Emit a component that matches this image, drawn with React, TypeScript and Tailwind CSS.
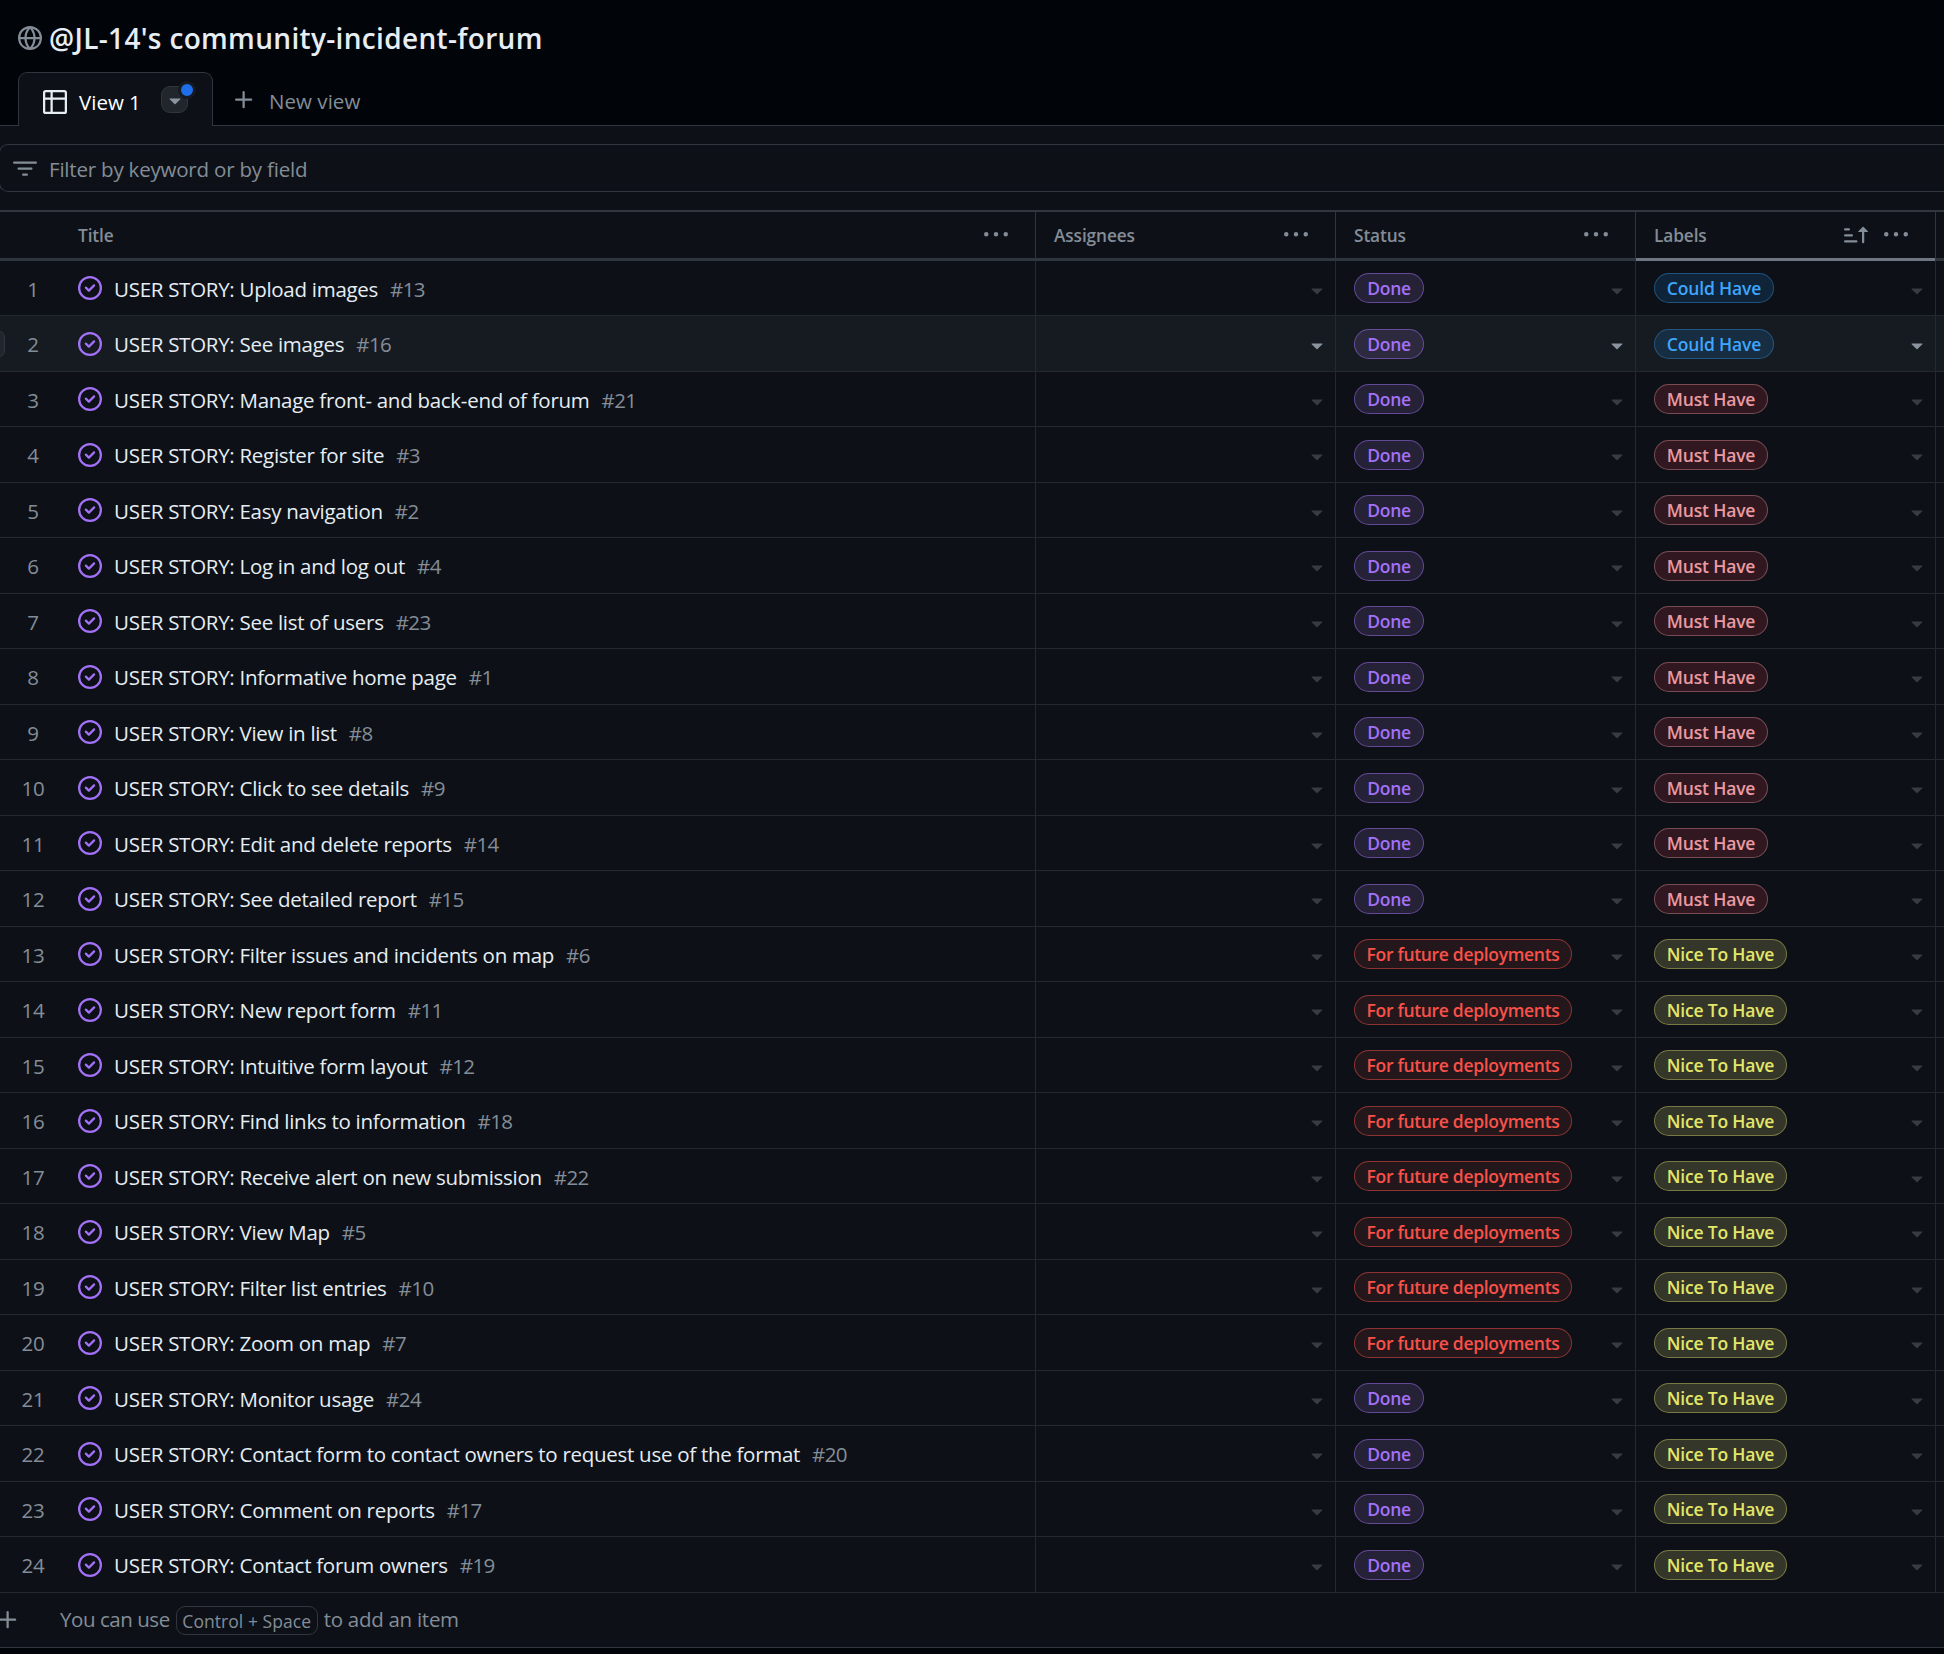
import React from "react";

const PATHS = {
  globe:
    "M8 0a8 8 0 1 1 0 16A8 8 0 0 1 8 0ZM5.78 8.75a9.64 9.64 0 0 0 1.363 4.177c.255.426.542.832.857 1.215.245-.296.551-.705.857-1.215A9.64 9.64 0 0 0 10.22 8.75Zm4.44-1.5a9.64 9.64 0 0 0-1.363-4.177c-.307-.51-.612-.919-.857-1.215a9.927 9.927 0 0 0-.857 1.215A9.64 9.64 0 0 0 5.78 7.25Zm-5.944 1.5H1.543a6.507 6.507 0 0 0 4.666 5.5c-.123-.181-.24-.365-.352-.552-.715-1.192-1.437-2.874-1.581-4.948Zm-2.733-1.5h2.733c.144-2.074.866-3.756 1.58-4.948.12-.197.237-.381.353-.552a6.507 6.507 0 0 0-4.666 5.5Zm10.181 1.5c-.144 2.074-.866 3.756-1.58 4.948-.12.197-.237.381-.353.552a6.507 6.507 0 0 0 4.666-5.5Zm2.733-1.5a6.507 6.507 0 0 0-4.666-5.5c.123.181.24.365.353.552.714 1.192 1.436 2.874 1.58 4.948Z",
  table:
    "M0 1.75C0 .784.784 0 1.75 0h12.5C15.216 0 16 .784 16 1.75v12.5A1.75 1.75 0 0 1 14.25 16H1.75A1.75 1.75 0 0 1 0 14.25ZM6.5 6.5v8h7.75a.25.25 0 0 0 .25-.25V6.5Zm8-1.5V1.75a.25.25 0 0 0-.25-.25H6.5V5Zm-13 1.5v7.75c0 .138.112.25.25.25H5v-8ZM5 5V1.5H1.75a.25.25 0 0 0-.25.25V5Z",
  triangle:
    "m4.427 7.427 3.396 3.396a.25.25 0 0 0 .354 0l3.396-3.396A.25.25 0 0 0 11.396 7H4.604a.25.25 0 0 0-.177.427Z",
  plus: "M7.75 2a.75.75 0 0 1 .75.75V7h4.25a.75.75 0 0 1 0 1.5H8.5v4.25a.75.75 0 0 1-1.5 0V8.5H2.75a.75.75 0 0 1 0-1.5H7V2.75A.75.75 0 0 1 7.75 2Z",
  filter:
    "M.75 3h14.5a.75.75 0 0 1 0 1.5H.75a.75.75 0 0 1 0-1.5ZM3 7.75A.75.75 0 0 1 3.75 7h8.5a.75.75 0 0 1 0 1.5h-8.5A.75.75 0 0 1 3 7.75Zm3 4a.75.75 0 0 1 .75-.75h2.5a.75.75 0 0 1 0 1.5h-2.5a.75.75 0 0 1-.75-.75Z",
  kebab:
    "M8 9a1.5 1.5 0 1 0 0-3 1.5 1.5 0 0 0 0 3ZM1.5 9a1.5 1.5 0 1 0 0-3 1.5 1.5 0 0 0 0 3Zm13 0a1.5 1.5 0 1 0 0-3 1.5 1.5 0 0 0 0 3Z",
  closed:
    "M11.28 6.78a.75.75 0 0 0-1.06-1.06L7.25 8.69 5.78 7.22a.75.75 0 0 0-1.06 1.06l2 2a.75.75 0 0 0 1.06 0l3.5-3.5ZM16 8A8 8 0 1 1 0 8a8 8 0 0 1 16 0Zm-1.5 0a6.5 6.5 0 1 0-13 0 6.5 6.5 0 0 0 13 0Z",
  sortAsc:
    "m12.927 2.573 3 3A.25.25 0 0 1 15.75 6H13.5v6.75a.75.75 0 0 1-1.5 0V6H9.75a.25.25 0 0 1-.177-.427l3-3a.25.25 0 0 1 .354 0ZM0 12.25a.75.75 0 0 1 .75-.75h7.5a.75.75 0 0 1 0 1.5H.75a.75.75 0 0 1-.75-.75Zm0-4a.75.75 0 0 1 .75-.75h4.5a.75.75 0 0 1 0 1.5H.75A.75.75 0 0 1 0 8.25Zm0-4a.75.75 0 0 1 .75-.75h2.5a.75.75 0 0 1 0 1.5H.75A.75.75 0 0 1 0 4.25Z",
};

function Icon({ name, className = "" }: { name: keyof typeof PATHS; className?: string }) {
  return (
    <svg viewBox="0 0 16 16" fill="currentColor" className={`size-6 shrink-0 ${className}`}>
      <path d={PATHS[name]} />
    </svg>
  );
}

type Tone = "done" | "future" | "could" | "must" | "nice";

const PILLS: Record<Tone, { text: string; className: string }> = {
  done: { text: "Done", className: "w-[70px] border-[#a371f7]/50 bg-[#a371d0]/17 text-[#a371f7]" },
  future: {
    text: "For future deployments",
    className: "w-[218px] tracking-[-0.32px] border-[#f85149]/50 bg-[#f85149]/10 text-[#f85149]",
  },
  could: {
    text: "Could Have",
    className: "w-[120px] tracking-[-0.15px] border-[#3fa6fd]/35 bg-[#1a7fd0]/18 text-[#3fa6fd]",
  },
  must: {
    text: "Must Have",
    className: "w-[114px] tracking-[-0.15px] border-[#ea9aa2]/40 bg-[#d93f4c]/18 text-[#ea9aa2]",
  },
  nice: {
    text: "Nice To Have",
    className: "w-[133px] tracking-[-0.2px] border-[#e3e26b]/40 bg-[#e4e67c]/18 text-[#e4e669]",
  },
};

function Pill({ tone }: { tone: Tone }) {
  const pill = PILLS[tone];
  return (
    <span
      className={`flex h-[30px] items-center justify-center rounded-full border pt-px text-[17.5px] leading-none font-semibold whitespace-nowrap ${pill.className}`}
    >
      {pill.text}
    </span>
  );
}

const ROWS: [string, number, Tone, Tone][] = [
  ["Upload images", 13, "done", "could"],
  ["See images", 16, "done", "could"],
  ["Manage front- and back-end of forum", 21, "done", "must"],
  ["Register for site", 3, "done", "must"],
  ["Easy navigation", 2, "done", "must"],
  ["Log in and log out", 4, "done", "must"],
  ["See list of users", 23, "done", "must"],
  ["Informative home page", 1, "done", "must"],
  ["View in list", 8, "done", "must"],
  ["Click to see details", 9, "done", "must"],
  ["Edit and delete reports", 14, "done", "must"],
  ["See detailed report", 15, "done", "must"],
  ["Filter issues and incidents on map", 6, "future", "nice"],
  ["New report form", 11, "future", "nice"],
  ["Intuitive form layout", 12, "future", "nice"],
  ["Find links to information", 18, "future", "nice"],
  ["Receive alert on new submission", 22, "future", "nice"],
  ["View Map", 5, "future", "nice"],
  ["Filter list entries", 10, "future", "nice"],
  ["Zoom on map", 7, "future", "nice"],
  ["Monitor usage", 24, "done", "nice"],
  ["Contact form to contact owners to request use of the format", 20, "done", "nice"],
  ["Comment on reports", 17, "done", "nice"],
  ["Contact forum owners", 19, "done", "nice"],
];

const COLUMNS = "grid grid-cols-[1036px_300px_300px_300px_1fr]";

function HeaderCell({ label, first, sorted }: { label: string; first?: boolean; sorted?: boolean }) {
  return (
    <div
      className={`flex items-center border-r border-[#30363d] pr-[27px] text-[17.25px] tracking-[-0.1px] font-semibold ${first ? "pl-[78px]" : "pl-[18px]"} ${
        sorted ? "shadow-[inset_0_-3px_0_#6e7681]" : "shadow-[inset_0_-3px_0_#30363d]"
      }`}
    >
      <span className="-mt-px flex-1">{label}</span>
      {sorted && <Icon name="sortAsc" className="mr-4 -mt-[2px]" />}
      <Icon name="kebab" className="-mt-[3px]" />
    </div>
  );
}

function Cell({ children, active }: { children?: React.ReactNode; active: boolean }) {
  return (
    <div className="flex items-center justify-between border-r border-[#24292f] pt-[1px] pr-[6px] pl-[18px]">
      <div>{children}</div>
      <Icon name="triangle" className={`mt-[3px] ${active ? "text-[#8b949e]" : "text-[#373b42]"}`} />
    </div>
  );
}

export default function App() {
  return (
    <div className="flex h-[1654px] w-[1944px] flex-col overflow-hidden bg-[#010409] font-['Open_Sans','Noto_Sans',sans-serif] text-[20.5px] tracking-[-0.28px] text-[#848d97]">
      <header className="flex h-[72px] shrink-0 items-center gap-[7px] pt-1 pl-[18px]">
        <Icon name="globe" />
        <h1 className="text-[28px] leading-none font-semibold tracking-[0.33px] text-[#e6edf3]">
          @JL-14's community-incident-forum
        </h1>
      </header>

      <nav className="flex h-[54px] shrink-0">
        <div className="w-[18px] border-b border-[#30363d]" />
        <div className="flex w-[195px] items-center rounded-t-[9px] border border-b-0 border-[#30363d] bg-[#0d1117] pt-[5px] pl-6 text-white">
          <Icon name="table" className="text-[#e6edf3]" />
          <span className="ml-3 w-[82px] tracking-normal">View 1</span>
          <button className="relative -mt-[5px] flex h-[27px] w-[27px] items-center justify-center rounded-[9px] border border-[#30363d] bg-[#21262d] text-[#8b949e]">
            <Icon name="triangle" />
            <span className="absolute -top-[6px] -right-[9px] size-[18px] rounded-full border-[3px] border-[#161b22] bg-[#1f6feb]" />
          </button>
        </div>
        <div className="flex flex-1 items-center gap-[13px] border-b border-[#30363d] pt-[3px] pl-[19px]">
          <Icon name="plus" />
          <span className="mt-[3px] tracking-[0.05px]">New view</span>
        </div>
      </nav>

      <main className="flex h-[1522px] shrink-0 flex-col border-b border-[#30363d] bg-[#0d1117]">
        <div className="mt-[18px] -ml-px flex h-12 shrink-0 items-center gap-3 rounded-l-[9px] border border-r-0 border-[#30363d] pl-[13px]">
          <Icon name="filter" className="mt-px" />
          <span className="mt-[3px] tracking-[-0.2px]">Filter by keyword or by field</span>
        </div>

        <div className={`${COLUMNS} mt-[18px] h-[50.5px] shrink-0 border-t-2 border-[#30363d]`}>
          <HeaderCell label="Title" first />
          <HeaderCell label="Assignees" />
          <HeaderCell label="Status" />
          <HeaderCell label="Labels" sorted />
          <div className="shadow-[inset_0_-3px_0_#30363d]" />
        </div>

        {ROWS.map(([title, id, status, label], i) => {
          const active = i === 1;
          return (
            <div
              key={id}
              className={`${COLUMNS} relative h-[55.5px] shrink-0 border-b border-[#24292f] ${active ? "bg-[#161b22]" : ""}`}
            >
              <div className="flex items-center border-r border-[#24292f] pt-[0.5px]">
                {active && (
                  <span className="absolute top-[15px] -left-[10px] h-[26px] w-[15px] rounded-[6px] border border-[#30363d] bg-[#21262d]" />
                )}
                <span className="mt-[2px] w-[66px] text-center">{i + 1}</span>
                <Icon name="closed" className="ml-3 text-[#a371f7]" />
                <span className="mt-[2px] ml-3 text-[#e6edf3]">USER STORY: {title}</span>
                <span className="mt-[2px] ml-3 tracking-[-0.6px]">#{id}</span>
              </div>
              <Cell active={active} />
              <Cell active={active}>
                <Pill tone={status} />
              </Cell>
              <Cell active={active}>
                <Pill tone={label} />
              </Cell>
              <div />
            </div>
          );
        })}

        <div className="flex flex-1 items-center">
          <Icon name="plus" className="-ml-1" />
          <span className="ml-10 tracking-[-0.45px]">You can use</span>
          <kbd className="mx-[6px] mt-[2px] flex h-[29px] w-[142px] items-center justify-center rounded-[9px] border border-[#30363d] font-['Open_Sans','Noto_Sans',sans-serif] text-[17.5px] tracking-[0.05px]">
            Control + Space
          </kbd>
          <span>to add an item</span>
        </div>
      </main>
    </div>
  );
}
